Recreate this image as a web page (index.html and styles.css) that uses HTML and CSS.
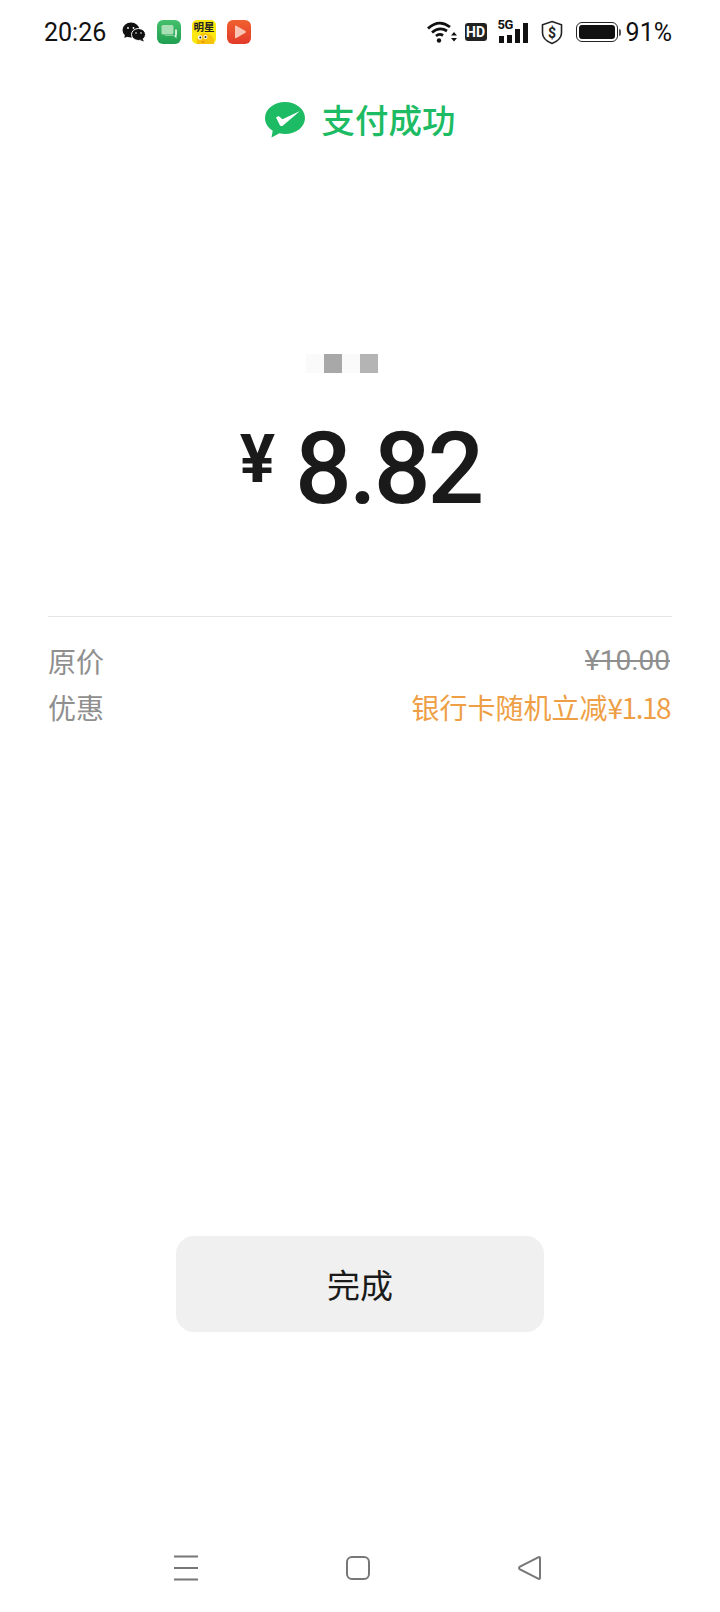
FILE: index.html
```html
<!DOCTYPE html>
<html lang="zh">
<head>
  <meta charset="UTF-8">
  <meta name="viewport" content="width=device-width, initial-scale=1.0">
  <title>支付成功</title>
  <link rel="stylesheet" href="styles.css">
</head>
<body>

<div id="page">

  <div class="status-bar">
    <span class="time">20:26</span>
    <svg class="notif wechat" width="24" height="20" viewBox="0 0 24 20">
      <ellipse cx="9" cy="8" rx="8.500" ry="7.500" fill="#111"/>
      <path d="M3 12l-.6 4 4.400-2z" fill="#111"/>
      <ellipse cx="16.500" cy="12.500" rx="7" ry="6" fill="#111" stroke="#fff" stroke-width="1"/>
      <path d="M20.500 16.500l1.400 3-4-1.600z" fill="#111"/>
      <circle cx="6" cy="6" r=".9" fill="#fff"/>
      <circle cx="11.500" cy="6" r=".9" fill="#fff"/>
      <circle cx="14" cy="11" r=".8" fill="#fff"/>
      <circle cx="19" cy="11" r=".8" fill="#fff"/>
    </svg>
    <svg class="notif" width="24" height="24" viewBox="0 0 24 24">
      <defs>
        <linearGradient id="msgGreen" x1="0" y1="0" x2="0" y2="1">
          <stop offset="0" stop-color="#45c06c"/>
          <stop offset="1" stop-color="#1f9f50"/>
        </linearGradient>
        <linearGradient id="playRed" x1="0" y1="0" x2="0" y2="1">
          <stop offset="0" stop-color="#f0602f"/>
          <stop offset="1" stop-color="#e33a2a"/>
        </linearGradient>
      </defs>
      <rect width="24" height="24" rx="6" fill="url(#msgGreen)"/>
      <rect x="4.500" y="5" width="12" height="9.500" rx="1.500" fill="#a9dfb4"/>
      <path d="M8 16h9l2.500 2.500v-2.700q.5-.3.500-1V9.500h-2v6H8z" fill="#cdeed2"/>
    </svg>
    <svg class="notif" width="24" height="24" viewBox="0 0 24 24">
      <rect width="24" height="24" rx="5" fill="#fbe712"/>
      <text x="12" y="10.500" class="logo-text">明星</text>
      <path d="M5 24c-1-6 2-11 7-11 6 0 10 4 10 8v3z" fill="#f7c20a"/>
      <circle cx="8" cy="17.500" r="2.200" fill="#fff"/>
      <circle cx="13.500" cy="17" r="2" fill="#fff"/>
      <circle cx="8.300" cy="17.500" r="1" fill="#222"/>
      <circle cx="13.500" cy="17" r="1" fill="#222"/>
      <path d="M9 21q2 1.500 4 0-2 3-4 0z" fill="#e2552b"/>
    </svg>
    <svg class="notif" width="24" height="24" viewBox="0 0 24 24">
      <rect width="24" height="24" rx="6" fill="url(#playRed)"/>
      <path d="M8 6.500q0-1.500 1.400-.8l9 5.300q1.200.9 0 1.800l-9 5.300q-1.400.7-1.400-.8z" fill="#f9c4b4"/>
    </svg>

    <span class="status-right">
      <svg width="32" height="24" viewBox="0 0 32 24">
        <path d="M1 8.500Q12-1.500 23 7M5 12.500q7.500-6.500 15-1.500M9 16q3.500-3 7-.5" fill="none" stroke="#111" stroke-width="2.800"/>
        <circle cx="12" cy="20.500" r="2.200" fill="#111"/>
        <path d="M24 15.500l3-3.500 3 3.500zM24 18h6l-3 3.500z" fill="#111"/>
      </svg>
      <span class="hd">HD</span>
      <span class="net">
        <span class="net-5g">5G</span>
        <svg width="32" height="22" viewBox="0 0 32 22">
          <rect x="1" y="15" width="5" height="7" fill="#111"/>
          <rect x="9" y="14" width="5" height="8" fill="#111"/>
          <rect x="17" y="8" width="5" height="14" fill="#111"/>
          <rect x="25" y="2" width="5" height="20" fill="#111"/>
        </svg>
      </span>
      <svg class="shield" width="24" height="25" viewBox="0 0 24 25">
        <path d="M12 1.500l9.500 3.300v8.200c0 5-4.500 8.500-9.500 10.500-5-2-9.500-5.500-9.500-10.500V4.800z" fill="none" stroke="#222" stroke-width="1.600"/>
        <text x="12" y="17.500" class="shield-text">$</text>
      </svg>
      <span class="battery">
        <span class="battery-body"><span class="battery-fill"></span></span>
        <span class="battery-tip"></span>
      </span>
      <span class="percent">91%</span>
    </span>
  </div>

  <div class="title">
    <svg width="40" height="36" viewBox="0 0 40 36">
      <path d="M20 0C9 0 0 7 0 16c0 5.300 3 9.800 7.700 12.700L6.500 35.500l8-4.300c1.800.5 3.600.8 5.500.8 11 0 20-7 20-16S31 0 20 0z" fill="#1dbb63"/>
      <path d="M11 15.500l2.500-1.500 4 3.300L35 9 18 23.500q-1.500 1-3 0z" fill="#fff"/>
    </svg>
    <span class="title-text">支付成功</span>
  </div>

  <div class="mosaic">
    <i class="m1"></i><i class="m2"></i><i class="m1"></i><i class="m3"></i>
  </div>

  <div class="amount">
    <span class="yen">¥</span>
    <span class="sum">8.82</span>
  </div>

  <div class="details">
    <div class="row">
      <span>原价</span>
      <span class="old-price">¥10.00</span>
    </div>
    <div class="row">
      <span>优惠</span>
      <span class="discount">银行卡随机立减<span class="discount-num">¥1.18</span></span>
    </div>
  </div>

  <button class="done">完成</button>

  <div class="nav-bar">
    <svg width="26" height="26" viewBox="0 0 26 26">
      <path d="M1 1.500h24M1 13h24M1 24.500h24" stroke="#777" stroke-width="2"/>
    </svg>
    <svg width="26" height="26" viewBox="0 0 26 26">
      <rect x="2" y="2" width="22" height="22" rx="5" fill="none" stroke="#777" stroke-width="2"/>
    </svg>
    <svg width="26" height="26" viewBox="0 0 26 26">
      <path d="M23 3.500q0-2-1.800-1.100L3 11.600q-2 1.400 0 2.800l18.200 9.200q1.800.9 1.800-1.100z" fill="none" stroke="#777" stroke-width="2"/>
    </svg>
  </div>

</div>

</body>
</html>
```

FILE: styles.css
```css
html, body {
  margin: 0;
  padding: 0;
  background-color: #fff;
  font-family: "Noto Sans CJK SC", "Roboto", sans-serif;
}

#page {
  display: flex;
  flex-direction: column;
  height: 1612px;
  overflow: hidden;
}

.status-bar {
  display: flex;
  align-items: center;
  height: 24px;
  padding: 20px 48px 0 44px;
  color: #111;
}

.time {
  font-family: "Roboto", sans-serif;
  font-size: 25px;
  width: 78px;
}

.notif {
  margin-right: 11px;
  flex: none;
}

.logo-text {
  font-family: "Noto Sans CJK SC", sans-serif;
  font-size: 10.500px;
  font-weight: 700;
  text-anchor: middle;
  fill: #222;
}

.status-right {
  display: flex;
  align-items: center;
  margin-left: auto;
}

.hd {
  width: 22px;
  height: 18px;
  margin-left: 6px;
  border-radius: 3px;
  background-color: #222;
  color: #fff;
  font-family: "Roboto", sans-serif;
  font-size: 14px;
  font-weight: 700;
  line-height: 18px;
  text-align: center;
}

.net {
  position: relative;
  display: flex;
  margin-left: 11px;
}

.net-5g {
  position: absolute;
  top: -3px;
  left: 0;
  color: #111;
  font-family: "Roboto", sans-serif;
  font-size: 13px;
  font-weight: 700;
  line-height: 13px;
  letter-spacing: -.5px;
}

.net svg {
  display: block;
}

.shield {
  margin-left: 10px;
}

.shield-text {
  font-family: "Roboto", sans-serif;
  font-size: 14px;
  font-weight: 700;
  text-anchor: middle;
  fill: #222;
}

.battery {
  display: flex;
  align-items: center;
  margin-left: 12px;
}

.battery-body {
  display: block;
  box-sizing: border-box;
  width: 42px;
  height: 20px;
  padding: 2px;
  border: 1.500px solid #222;
  border-radius: 6px;
}

.battery-fill {
  display: block;
  height: 100%;
  border-radius: 3px;
  background-color: #111;
}

.battery-tip {
  width: 2px;
  height: 7px;
  margin-left: 1px;
  border-radius: 0 2px 2px 0;
  background-color: #555;
}

.percent {
  margin-left: 5px;
  font-family: "Roboto", sans-serif;
  font-size: 25px;
}

.title {
  display: flex;
  align-items: center;
  justify-content: center;
  gap: 17px;
  margin-top: 58px;
  height: 36px;
  color: #1dbb63;
  font-size: 33.500px;
  font-weight: 500;
}

.title-text {
  margin-bottom: 3px;
}

.mosaic {
  display: flex;
  align-self: flex-start;
  margin: 216px 0 0 306px;
}

.mosaic i {
  width: 18px;
  height: 19px;
}

.m1 {
  background-color: #fafafa;
}

.m2 {
  background-color: #a8a8a8;
}

.m3 {
  background-color: #b4b4b4;
}

.amount {
  display: flex;
  align-items: flex-start;
  justify-content: center;
  gap: 20px;
  margin-top: 51px;
  padding-left: 1px;
  color: #1a1a1a;
}

.yen {
  font-family: "Roboto", sans-serif;
  font-size: 66px;
  font-weight: 700;
  line-height: 72px;
}

.sum {
  font-family: "Roboto", sans-serif;
  font-size: 100px;
  font-weight: 500;
  line-height: 90px;
  letter-spacing: -3px;
}

.details {
  margin: 102px 48px 0;
  padding-top: 27px;
  border-top: 1px solid #e5e5e5;
  color: #8f8f8f;
  font-size: 28px;
}

.row {
  display: flex;
  justify-content: space-between;
  height: 46px;
  padding-right: 2px;
  line-height: 34px;
}

.old-price {
  text-decoration: line-through;
  font-family: "Roboto", sans-serif;
}

.discount {
  color: #ee9f45;
}

.discount-num {
  letter-spacing: -1.500px;
}

.done {
  align-self: center;
  width: 368px;
  height: 96px;
  margin-top: auto;
  border: none;
  border-radius: 18px;
  background-color: #f0f0f0;
  color: #1a1a1a;
  font-family: inherit;
  font-size: 33px;
}

.nav-bar {
  display: flex;
  justify-content: space-between;
  margin-top: 223px;
  padding: 0 177px 31px 173px;
}

.nav-bar svg {
  display: block;
}
```
